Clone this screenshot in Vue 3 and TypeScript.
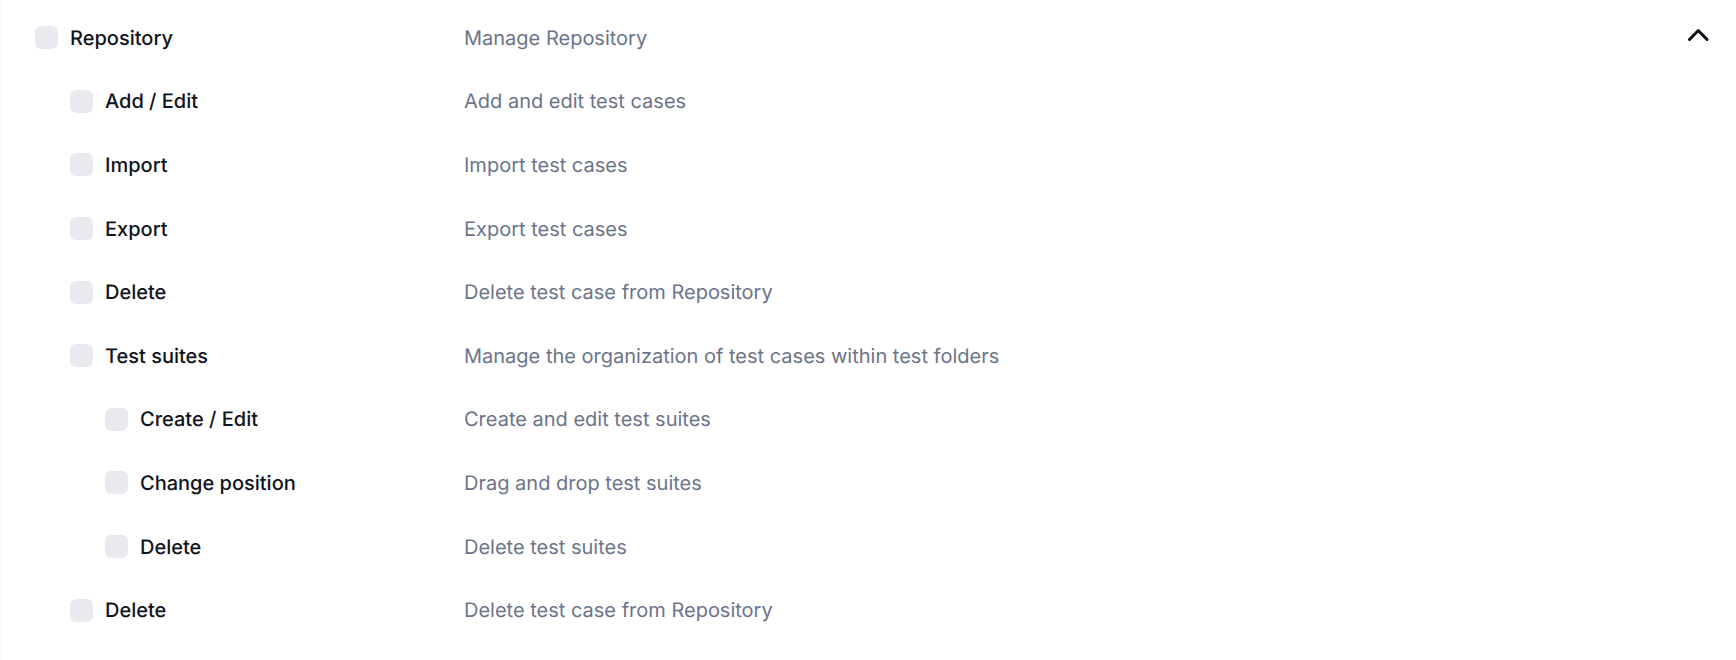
<script setup lang="ts">
import { computed, ref } from 'vue'

interface Permission {
  id: string
  label: string
  description: string
  level: number
}

const permissions: Permission[] = [
  { id: 'repository', label: 'Repository', description: 'Manage Repository', level: 0 },
  { id: 'add-edit', label: 'Add / Edit', description: 'Add and edit test cases', level: 1 },
  { id: 'import', label: 'Import', description: 'Import test cases', level: 1 },
  { id: 'export', label: 'Export', description: 'Export test cases', level: 1 },
  { id: 'delete-case', label: 'Delete', description: 'Delete test case from Repository', level: 1 },
  { id: 'suites', label: 'Test suites', description: 'Manage the organization of test cases within test folders', level: 1 },
  { id: 'suite-edit', label: 'Create / Edit', description: 'Create and edit test suites', level: 2 },
  { id: 'suite-position', label: 'Change position', description: 'Drag and drop test suites', level: 2 },
  { id: 'suite-delete', label: 'Delete', description: 'Delete test suites', level: 2 },
  { id: 'delete', label: 'Delete', description: 'Delete test case from Repository', level: 1 },
]

const selected = ref<string[]>([])
const open = ref(true)
const visible = computed(() => permissions.filter((p) => open.value || p.level === 0))
</script>

<template>
  <main class="panel">
    <ul class="list" :class="{ expanded: open }">
      <li v-for="p in visible" :key="p.id" class="row">
        <label class="name" :class="`level-${p.level}`">
          <input v-model="selected" class="check" type="checkbox" :value="p.id" :aria-describedby="`${p.id}-text`" />
          <span>{{ p.label }}</span>
        </label>
        <span :id="`${p.id}-text`" class="description">{{ p.description }}</span>
      </li>
    </ul>
    <button class="toggle" type="button" aria-label="Toggle Repository permissions" :aria-expanded="open" @click="open = !open">
      <svg class="chevron" :class="{ closed: !open }" viewBox="0 0 24 24" aria-hidden="true">
        <path d="M3.5 16.5 12.3 7.5l8.7 9" />
      </svg>
    </button>
  </main>
</template>

<style>
body {
  background: #fff;
}
</style>

<style scoped>
.panel {
  display: flex;
  align-items: flex-start;
  box-sizing: border-box;
  min-height: 100vh;
  padding: 6px 26px 18px 34px;
  border-left: 1px solid #f8f8fa;
  font-family: Inter, "Liberation Sans", sans-serif;
  font-size: 20px;
  line-height: 24px;
  text-rendering: geometricPrecision;
}
.list {
  display: grid;
  flex: 1;
  grid-auto-rows: minmax(60px, 1fr);
  margin: 0;
  padding: 0;
  list-style: none;
}
.expanded {
  align-self: stretch;
}
.row {
  display: grid;
  grid-template-columns: 429px 1fr;
  align-items: center;
}
.name {
  display: flex;
  align-items: center;
  gap: 12px;
  color: #101320;
  font-weight: 500;
}
.level-1 {
  padding-left: 35px;
}
.level-2 {
  padding-left: 70px;
}
.check {
  appearance: none;
  flex: none;
  width: 23px;
  height: 23px;
  margin: 0;
  border-radius: 6px;
  background: #e9eaef;
}
.check:checked {
  background: #4c5df0;
}
.description {
  color: #6b7489;
}
.toggle {
  display: flex;
  margin: 17px 0 0;
  padding: 0;
  border: 0;
  background: none;
}
.chevron {
  width: 24px;
  height: 24px;
  fill: none;
  stroke: #0b0d17;
  stroke-width: 3;
  stroke-linecap: round;
  stroke-linejoin: round;
}
.closed {
  transform: rotate(180deg);
}
</style>
